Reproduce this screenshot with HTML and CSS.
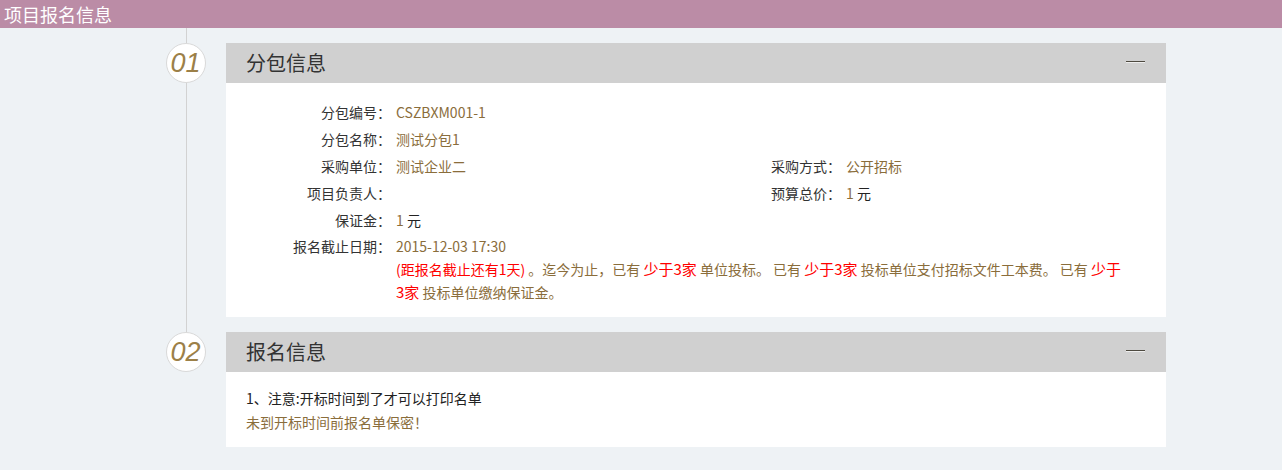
FILE: index.html
```html
<!DOCTYPE html>
<html lang="zh-CN">
<head>
<meta charset="utf-8">
<title>项目报名信息</title>
<link rel="stylesheet" href="styles.css">
</head>
<body>
<div class="topbar">项目报名信息</div>
<div class="timeline">
  <section class="step">
    <div class="rail">
      <div class="rail-seg"></div>
      <div class="num">01</div>
      <div class="rail-tail"></div>
    </div>
    <div class="panel">
      <div class="panel-head">
        <h2 class="panel-title">分包信息</h2>
        <span class="collapse"></span>
      </div>
      <div class="panel-body info-grid">
        <div class="lbl">分包编号：</div><div class="val span3">CSZBXM001-1</div>
        <div class="lbl">分包名称：</div><div class="val span3">测试分包1</div>
        <div class="lbl">采购单位：</div><div class="val">测试企业二</div>
        <div class="lbl">采购方式：</div><div class="val">公开招标</div>
        <div class="lbl">项目负责人：</div><div class="val"></div>
        <div class="lbl">预算总价：</div><div class="val">1 <span class="unit">元</span></div>
        <div class="lbl">保证金：</div><div class="val span3">1 <span class="unit">元</span></div>
        <div class="lbl lbl-multi">报名截止日期：</div>
        <div class="val span3 multi">2015-12-03 17:30<br><span class="red">(距报名截止还有1天)</span> 。迄今为止，已有 <span class="red big">少于3家</span> 单位投标。 已有 <span class="red big">少于3家</span> 投标单位支付招标文件工本费。 已有 <span class="red big">少于3家</span> 投标单位缴纳保证金。</div>
      </div>
    </div>
  </section>
  <section class="step">
    <div class="rail">
      <div class="rail-seg"></div>
      <div class="num">02</div>
    </div>
    <div class="panel">
      <div class="panel-head">
        <h2 class="panel-title">报名信息</h2>
        <span class="collapse"></span>
      </div>
      <div class="panel-body notes">
        <p class="note-main">1、注意:开标时间到了才可以打印名单</p>
        <p class="note-sub">未到开标时间前报名单保密！</p>
      </div>
    </div>
  </section>
</div>
</body>
</html>
```

FILE: styles.css
```css
html, body {
  margin: 0;
  padding: 0;
}
body {
  background: #eef2f5;
  font-family: "Noto Sans CJK SC", "Noto Sans", sans-serif;
  color: #333;
  font-size: 14px;
  height: 470px;
  overflow: hidden;
}
.topbar {
  height: 28px;
  line-height: 28px;
  background: #bb8ca6;
  color: #fff;
  font-size: 18px;
  padding-left: 4px;
}
.timeline {
  margin-left: 166px;
  width: 1000px;
}
.step {
  display: flex;
  gap: 20px;
}
.rail {
  width: 40px;
  display: flex;
  flex-direction: column;
  align-items: center;
  flex: none;
}
.rail-seg {
  width: 1px;
  height: 15px;
  background: #d2d2d2;
}
.rail-tail {
  width: 1px;
  flex: 1;
  background: #d2d2d2;
}
.num {
  width: 38px;
  height: 38px;
  border: 1px solid #d9d9d9;
  border-radius: 50%;
  background: #fff;
  font-family: "Liberation Sans", Arial, sans-serif;
  font-style: italic;
  font-size: 27px;
  line-height: 38px;
  text-align: center;
  color: #9c8048;
  text-indent: -1px;
}
.panel {
  width: 940px;
  margin-top: 15px;
}
.panel-head {
  height: 40px;
  background: #d0d0d0;
  display: flex;
  align-items: center;
  justify-content: space-between;
  padding: 0 21px 0 20px;
}
.panel-title {
  margin: 0;
  font-size: 20px;
  font-weight: normal;
  color: #333;
  line-height: 40px;
}
.collapse {
  width: 19px;
  height: 1px;
  background: #4e4a40;
  border-bottom: 1px solid #eeeeee;
  margin-top: -2px;
}
.panel-body {
  background: #fff;
}
.info-grid {
  display: grid;
  grid-template-columns: 165px 1fr 165px 300px;
  column-gap: 5px;
  padding: 16px 20px 13px 0;
  line-height: 27px;
}
.lbl {
  text-align: right;
  color: #333;
  white-space: nowrap;
}
.val {
  color: #8a6d3b;
}
.span3 {
  grid-column: 2 / 5;
}
.unit {
  color: #222;
}
.lbl-multi {
  line-height: 23px;
  margin-top: 1px;
}
.multi {
  line-height: 23px;
  margin-top: 1px;
  padding-right: 21px;
}
.red {
  color: #f00;
}
.big {
  font-size: 15px;
  line-height: 18px;
}
.notes {
  padding: 14px 20px 13px 20px;
}
.notes p {
  margin: 0;
  line-height: 24px;
  font-size: 14px;
}
.note-main {
  color: #222;
}
.note-sub {
  color: #8a6d3b;
}
```
